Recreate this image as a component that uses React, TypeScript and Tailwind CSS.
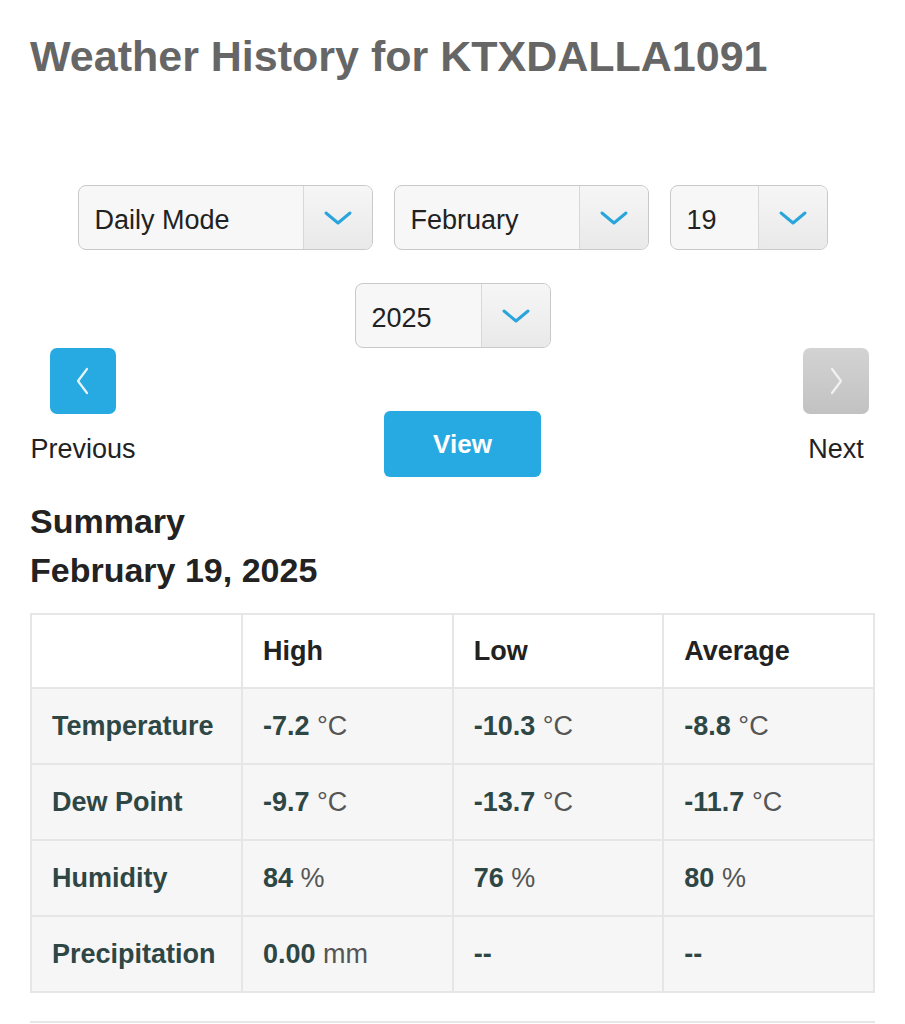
import React from "react";

const font = { fontFamily: '"Liberation Sans", Arial, sans-serif' };

function Chevron() {
  return (
    <svg width="30" height="18" viewBox="0 0 30 18" fill="none">
      <path d="M3 4 L15 14 L27 4" stroke="#2aa5dc" strokeWidth="3" strokeLinecap="round" strokeLinejoin="round" />
    </svg>
  );
}

function Select({ label, width }: { label: string; width: string }) {
  return (
    <div className={`flex h-[65px] ${width} rounded-[8px] border border-[#c9c9c9] bg-[#f7f7f7] overflow-hidden`}>
      <div className="flex-1 flex items-center pl-[16px] pt-[6px] text-[27px] text-[#222]">{label}</div>
      <div className="w-[69px] flex items-center justify-center border-l border-[#d8d8d8] bg-gradient-to-b from-[#f6f6f6] to-[#e9e9e9]">
        <Chevron />
      </div>
    </div>
  );
}

type Row = { name: string; cells: [string, string][] };

const rows: Row[] = [
  { name: "Temperature", cells: [["-7.2", "°C"], ["-10.3", "°C"], ["-8.8", "°C"]] },
  { name: "Dew Point", cells: [["-9.7", "°C"], ["-13.7", "°C"], ["-11.7", "°C"]] },
  { name: "Humidity", cells: [["84", "%"], ["76", "%"], ["80", "%"]] },
  { name: "Precipitation", cells: [["0.00", "mm"], ["--", ""], ["--", ""]] },
];

export default function App() {
  return (
    <div style={font} className="w-[905px] h-[1024px] overflow-hidden bg-white">
      <div className="px-[30px]">
        <h1 className="pt-[30px] text-[43px] leading-[52px] font-bold text-[#666]">Weather History for KTXDALLA1091</h1>

        <div className="mt-[103px] flex justify-center gap-[21px]">
          <Select label="Daily Mode" width="w-[295px]" />
          <Select label="February" width="w-[255px]" />
          <Select label="19" width="w-[158px]" />
        </div>
        <div className="mt-[33px] flex justify-center">
          <Select label="2025" width="w-[196px]" />
        </div>

        <div className="flex items-start justify-between">
          <div className="flex flex-col items-center w-[106px]">
            <div className="w-[66px] h-[66px] rounded-[7px] bg-[#27a9e1] flex items-center justify-center">
              <svg width="20" height="30" viewBox="0 0 20 30" fill="none">
                <path d="M14 3 L5 15 L14 27" stroke="#e6f5fc" strokeWidth="2.2" strokeLinecap="round" strokeLinejoin="round" />
              </svg>
            </div>
            <div className="mt-[19px] text-[27px] leading-[32px] text-[#222]">Previous</div>
          </div>
          <div className="mt-[63px] mr-[14px] w-[157px] h-[66px] rounded-[6px] bg-[#27a9e1] flex items-center justify-center text-white font-bold text-[26px]">
            View
          </div>
          <div className="flex flex-col items-center w-[66px] mr-[6px]">
            <div className="w-[66px] h-[66px] rounded-[7px] bg-gradient-to-b from-[#d3d3d3] to-[#c2c2c2] flex items-center justify-center">
              <svg width="20" height="30" viewBox="0 0 20 30" fill="none">
                <path d="M6 3 L15 15 L6 27" stroke="#f2f2f2" strokeWidth="2.2" strokeLinecap="round" strokeLinejoin="round" />
              </svg>
            </div>
            <div className="mt-[19px] text-[27px] leading-[32px] text-[#222]">Next</div>
          </div>
        </div>

        <div className="mt-[20px] text-[34px] leading-[49px] font-bold text-[#222]">Summary</div>
        <div className="text-[34px] leading-[49px] font-bold text-[#222]">February 19, 2025</div>

        <table className="mt-[18px] w-[845px] border-collapse table-fixed text-[27px]">
          <thead>
            <tr className="h-[74px] bg-white">
              <th className="border-2 border-[#e6e6e6] w-[211px]"></th>
              <th className="border-2 border-[#e6e6e6] text-left pl-[20px] font-bold text-[#222]">High</th>
              <th className="border-2 border-[#e6e6e6] text-left pl-[20px] font-bold text-[#222]">Low</th>
              <th className="border-2 border-[#e6e6e6] text-left pl-[20px] font-bold text-[#222]">Average</th>
            </tr>
          </thead>
          <tbody>
            {rows.map((r) => (
              <tr key={r.name} className="h-[76px] bg-[#f6f6f6]">
                <td className="border-2 border-[#e6e6e6] pl-[20px] font-bold text-[#2e4745]">{r.name}</td>
                {r.cells.map(([v, u], i) => (
                  <td key={i} className="border-2 border-[#e6e6e6] pl-[20px]">
                    <span className="font-bold text-[#2e4745]">{v}</span>
                    {u && <span className="text-[#555]"> {u}</span>}
                  </td>
                ))}
              </tr>
            ))}
          </tbody>
        </table>
        <div className="mt-[28px] h-[2px] w-[845px] bg-[#e6e6e6]"></div>
      </div>
    </div>
  );
}
